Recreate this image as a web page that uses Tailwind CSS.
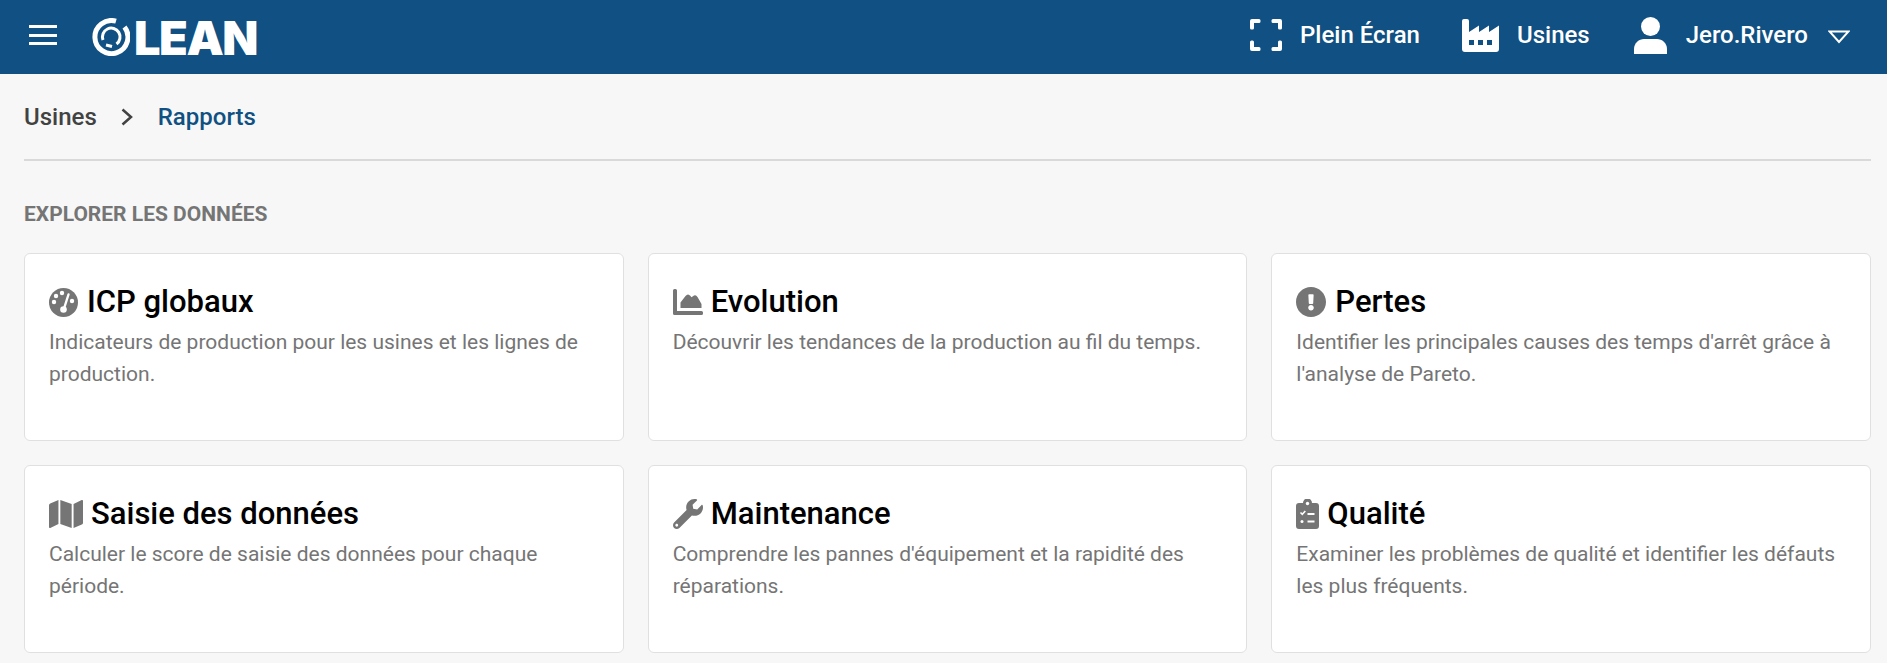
<!DOCTYPE html>
<html lang="fr">
<head>
    <meta charset="UTF-8">
    <title>Rapports</title>
    <script src="https://cdn.jsdelivr.net/npm/@tailwindcss/browser@4"></script>
</head>
<body class="bg-[#f7f7f7] font-[family-name:Roboto,sans-serif] overflow-hidden h-[663px]">
    <!-- Top bar -->
    <header class="h-[74px] bg-[#105082] flex items-center text-white">
        <div class="ml-[29px] mb-[4px] w-[28px] flex flex-col gap-[5.5px]">
            <span class="block h-[3px] bg-white"></span>
            <span class="block h-[3px] bg-white"></span>
            <span class="block h-[3px] bg-white"></span>
        </div>
        <div class="ml-[35px] flex items-center">
            <svg class="w-[38px] h-[38px]" viewBox="0 0 38 38" fill="none" stroke="white">
                <path d="M24 3.2 A16.5 16.5 0 1 0 32.5 9" stroke-width="5"/>
                <path d="M11 22 A8.8 8.8 0 1 1 24.5 26" stroke-width="3"/>
                <path d="M14 27 L20 28.5" stroke-width="3"/>
            </svg>
            <span class="ml-[4px] font-[family-name:Inter,sans-serif] text-[47px] leading-none font-black tracking-[-1.5px]">LEAN</span>
        </div>
        <div class="ml-auto mb-[4px] flex items-center">
            <svg class="w-[32px] h-[32px]" viewBox="0 0 32 32" fill="white">
                <path d="M2 0h7a1.5 1.5 0 0 1 1.500 1.500v1A1.500 1.500 0 0 1 9 4H4v5a1.500 1.500 0 0 1-1.500 1.500h-1A1.500 1.500 0 0 1 0 9V2a2 2 0 0 1 2-2z"/>
                <path d="M30 0h-7a1.500 1.500 0 0 0-1.500 1.500v1A1.500 1.500 0 0 0 23 4h5v5a1.500 1.500 0 0 0 1.500 1.500h1A1.500 1.500 0 0 0 32 9V2a2 2 0 0 0-2-2z"/>
                <path d="M2 32h7a1.500 1.500 0 0 0 1.500-1.500v-1A1.500 1.500 0 0 0 9 28H4v-5a1.500 1.500 0 0 0-1.500-1.500h-1A1.500 1.500 0 0 0 0 23v7a2 2 0 0 0 2 2z"/>
                <path d="M30 32h-7a1.500 1.500 0 0 1-1.500-1.500v-1A1.500 1.500 0 0 1 23 28h5v-5a1.500 1.500 0 0 1 1.500-1.500h1A1.500 1.500 0 0 1 32 23v7a2 2 0 0 1-2 2z"/>
            </svg>
            <span class="ml-[18px] text-[24px] font-medium">Plein Écran</span>
            <svg class="ml-[42px] w-[37px] h-[33px]" viewBox="0 0 37 33">
                <path fill="white" d="M0 2a2 2 0 0 1 2-2h3a2 2 0 0 1 2 2v11l10-6.500V13l10-6.500V13l10-6.500V30a3 3 0 0 1-3 3H3a3 3 0 0 1-3-3z"/>
                <rect x="7" y="21" width="5" height="5" fill="#105082"/>
                <rect x="16" y="21" width="5" height="5" fill="#105082"/>
                <rect x="25" y="21" width="5" height="5" fill="#105082"/>
            </svg>
            <span class="ml-[18px] text-[24px] font-medium">Usines</span>
            <svg class="ml-[44px] w-[33px] h-[37px]" viewBox="0 0 33 37" fill="white">
                <ellipse cx="16.500" cy="9.500" rx="9.500" ry="9.500"/>
                <path d="M0 37v-5c0-6 5-10 10-10h13c5 0 10 4 10 10v5z"/>
            </svg>
            <span class="ml-[19px] text-[24px] font-medium">Jero.Rivero</span>
            <svg class="ml-[20px] mr-[37px] mt-[4px] w-[22px] h-[14px]" viewBox="0 0 22 14" fill="none" stroke="white" stroke-width="2">
                <path d="M1.500 1.500h19L11 12z"/>
            </svg>
        </div>
    </header>

    <main class="pl-6 pr-4">
        <!-- Breadcrumb -->
        <nav class="h-[87px] flex items-center border-b-2 border-[#d9d9d9] text-[24px] font-medium">
            <span class="text-[#424242]">Usines</span>
            <svg class="ml-[24px] w-[12px] h-[18px]" viewBox="0 0 12 18" fill="none" stroke="#424242" stroke-width="2.500">
                <path d="M1.500 1.500l8.500 7.500-8.500 7.500"/>
            </svg>
            <span class="ml-[25px] text-[#105082]">Rapports</span>
        </nav>

        <h2 class="mt-[41px] text-[21px] leading-[24px] font-bold text-[#757575]">EXPLORER LES DONNÉES</h2>

        <section class="mt-[27px] grid grid-cols-3 gap-6">
            <article class="h-[188px] bg-white border border-[#e0e0e0] rounded-md px-6 pt-[30px]">
                <h3 class="flex items-center gap-[9px] h-[36px] text-[31px] font-medium text-black">
                    <svg class="w-[29px] h-[29px]" viewBox="0 0 29 29">
                        <circle cx="14.500" cy="14.500" r="14.500" fill="#757575"/>
                        <g fill="white">
                            <circle cx="13" cy="5" r="2.200"/>
                            <circle cx="7" cy="8" r="2.200"/>
                            <circle cx="5" cy="14" r="2.200"/>
                            <circle cx="23" cy="13" r="2.200"/>
                        </g>
                        <path d="M19.500 6.500L15.500 19" stroke="white" stroke-width="2.400" stroke-linecap="round"/>
                        <circle cx="14.500" cy="21.500" r="3.300" fill="white"/>
                    </svg>
                    ICP globaux
                </h3>
                <p class="mt-[6px] text-[21px] leading-[32.4px] text-[#757575]">Indicateurs de production pour les usines et les lignes de production.</p>
            </article>
            <article class="h-[188px] bg-white border border-[#e0e0e0] rounded-md px-6 pt-[30px]">
                <h3 class="flex items-center gap-2 h-[36px] text-[31px] font-medium text-black">
                    <svg class="w-[30px] h-[26px]" viewBox="0 0 30 26" fill="#757575">
                        <path d="M0 1.500A1.500 1.500 0 0 1 1.500 0h1A1.500 1.500 0 0 1 4 1.500V22h24.500a1.500 1.500 0 0 1 1.500 1.500v1a1.500 1.500 0 0 1-1.500 1.500h-27A1.500 1.500 0 0 1 0 24.500z"/>
                        <path d="M7.500 19v-5.500l5-6.500q2.500-3 5 0l1 1.200 2.500-1.700q2-1 3.500 1.500l4 7V19z"/>
                    </svg>
                    Evolution
                </h3>
                <p class="mt-[6px] text-[21px] leading-[32.4px] text-[#757575]">Découvrir les tendances de la production au fil du temps.</p>
            </article>
            <article class="h-[188px] bg-white border border-[#e0e0e0] rounded-md px-6 pt-[30px]">
                <h3 class="flex items-center gap-[9px] h-[36px] text-[31px] font-medium text-black">
                    <svg class="w-[30px] h-[30px]" viewBox="8 8 496 496" fill="#757575">
                        <path d="M504 256c0 136.997-111.043 248-248 248S8 392.997 8 256C8 119.083 119.043 8 256 8s248 111.083 248 248zm-248 50c-25.405 0-46 20.595-46 46s20.595 46 46 46 46-20.595 46-46-20.595-46-46-46zm-43.673-165.346l7.418 136c.347 6.364 5.609 11.346 11.982 11.346h48.546c6.373 0 11.635-4.982 11.982-11.346l7.418-136c.375-6.874-5.098-12.654-11.982-12.654h-63.383c-6.884 0-12.356 5.78-11.981 12.654z"/>
                    </svg>
                    Pertes
                </h3>
                <p class="mt-[6px] text-[21px] leading-[32.4px] text-[#757575]">Identifier les principales causes des temps d'arrêt grâce à l'analyse de Pareto.</p>
            </article>
            <article class="h-[188px] bg-white border border-[#e0e0e0] rounded-md px-6 pt-[30px]">
                <h3 class="flex items-center gap-2 h-[36px] text-[31px] font-medium text-black">
                    <svg class="w-[34px] h-[28px]" viewBox="0 32 576 448" preserveAspectRatio="none" fill="#757575">
                        <path d="M0 117.66v346.32c0 11.32 11.43 19.06 21.94 14.86L160 416V32L20.12 87.95A32.006 32.006 0 0 0 0 117.66zM192 416l192 64V96L192 32v384zM554.06 33.16L416 96v384l139.88-55.95A31.996 31.996 0 0 0 576 394.34V48.02c0-11.32-11.43-19.06-21.94-14.86z"/>
                    </svg>
                    Saisie des données
                </h3>
                <p class="mt-[6px] text-[21px] leading-[32.4px] text-[#757575]">Calculer le score de saisie des données pour chaque période.</p>
            </article>
            <article class="h-[188px] bg-white border border-[#e0e0e0] rounded-md px-6 pt-[30px]">
                <h3 class="flex items-center gap-2 h-[36px] text-[31px] font-medium text-black">
                    <svg class="w-[30px] h-[30px]" viewBox="0 0 512 512" fill="#757575">
                        <path d="M507.73 109.1c-2.24-9.03-13.54-12.09-20.12-5.51l-74.36 74.36-67.88-11.31-11.31-67.88 74.36-74.36c6.62-6.62 3.43-17.9-5.66-20.16-47.38-11.74-99.55.91-136.58 37.93-39.64 39.64-50.55 97.1-34.05 147.2L18.74 402.76c-24.99 24.99-24.99 65.51 0 90.5 24.99 24.99 65.51 24.99 90.5 0l213.21-213.21c50.12 16.71 107.47 5.68 147.37-34.22 37.07-37.07 49.7-89.32 37.91-136.73zM64 472c-13.25 0-24-10.75-24-24 0-13.26 10.75-24 24-24s24 10.74 24 24c0 13.25-10.75 24-24 24z"/>
                    </svg>
                    Maintenance
                </h3>
                <p class="mt-[6px] text-[21px] leading-[32.4px] text-[#757575]">Comprendre les pannes d'équipement et la rapidité des réparations.</p>
            </article>
            <article class="h-[188px] bg-white border border-[#e0e0e0] rounded-md px-6 pt-[30px]">
                <h3 class="flex items-center gap-2 h-[36px] text-[31px] font-medium text-black">
                    <svg class="w-[23px] h-[30px]" viewBox="0 0 23 30">
                        <path fill="#757575" d="M3 4h4a4.500 4.500 0 0 1 9 0h4a3 3 0 0 1 3 3v20a3 3 0 0 1-3 3H3a3 3 0 0 1-3-3V7a3 3 0 0 1 3-3z"/>
                        <circle cx="11.500" cy="4.500" r="1.700" fill="white"/>
                        <path d="M4.500 13.500l1.800 1.800 3-3.300" fill="none" stroke="white" stroke-width="1.600"/>
                        <path d="M11.500 15h7M11.500 22.500h7" stroke="white" stroke-width="1.800"/>
                        <circle cx="6" cy="22.500" r="1.500" fill="white"/>
                    </svg>
                    Qualité
                </h3>
                <p class="mt-[6px] text-[21px] leading-[32.4px] text-[#757575]">Examiner les problèmes de qualité et identifier les défauts les plus fréquents.</p>
            </article>
        </section>
    </main>
</body>
</html>
